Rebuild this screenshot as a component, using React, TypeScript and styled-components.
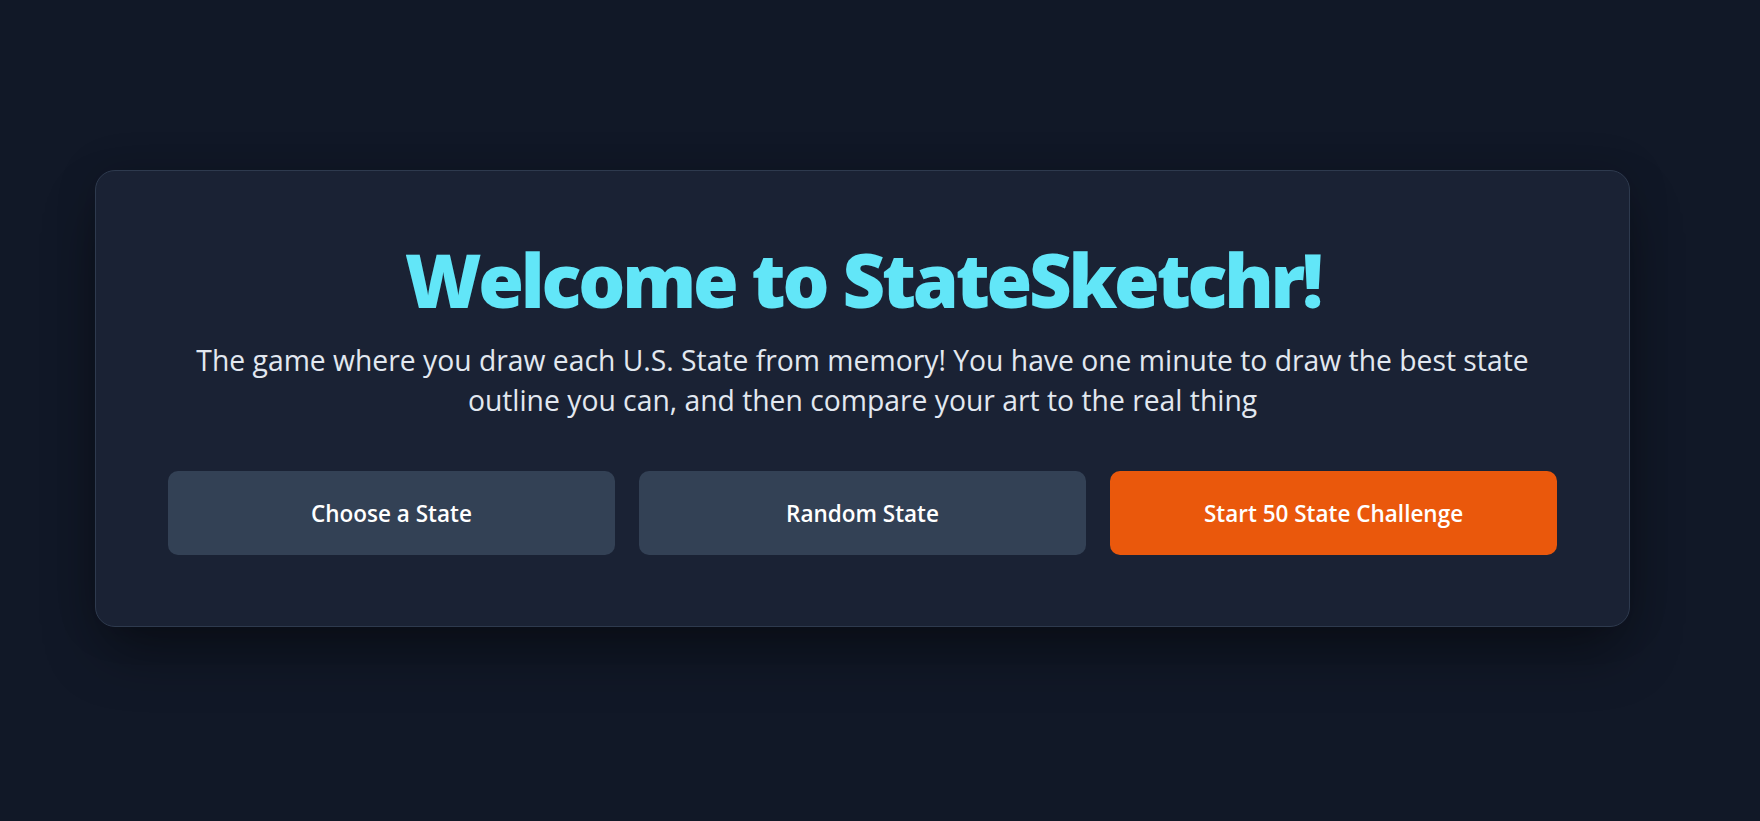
import React from "react";
import styled, { createGlobalStyle } from "styled-components";

const GlobalStyle = createGlobalStyle`
  html, body {
    margin: 0;
    padding: 0;
    background: #111827;
  }
  body {
    font-family: "Open Sans", "Noto Sans", sans-serif;
    -webkit-font-smoothing: antialiased;
  }
`;

const Page = styled.main`
  min-height: 821px;
  box-sizing: border-box;
  padding: 170px 0 0 95px;
  background: #111827;
`;

const Card = styled.section`
  box-sizing: border-box;
  width: 1535px;
  height: 457px;
  padding: 71px 72px;
  background: #1a2234;
  border: 1px solid #2e3a4e;
  border-radius: 20px;
  box-shadow: 0 30px 60px -10px rgba(0, 0, 0, 0.45), 0 0 40px rgba(0, 0, 0, 0.15);
  display: flex;
  flex-direction: column;
  align-items: center;
`;

const Title = styled.h1`
  margin: 0;
  font-family: "Open Sans", "Noto Sans", sans-serif;
  font-weight: 800;
  font-size: 74px;
  line-height: 75px;
  letter-spacing: -3.2px;
  color: #62e6f8;
  text-align: center;
`;

const Subtitle = styled.p`
  margin: 23px 0 51px;
  width: 1390px;
  font-family: "Open Sans", "Noto Sans", sans-serif;
  font-weight: 400;
  font-size: 28.3px;
  line-height: 40px;
  color: #e2e8f0;
  text-align: center;
`;

const ButtonRow = styled.div`
  width: 100%;
  display: grid;
  grid-template-columns: repeat(3, 1fr);
  gap: 24px;
`;

const ActionButton = styled.button<{ $primary?: boolean }>`
  height: 84px;
  border: none;
  border-radius: 10px;
  background: ${(p) => (p.$primary ? "#ea580c" : "#334155")};
  color: #ffffff;
  font-family: "Open Sans", "Noto Sans", sans-serif;
  font-weight: 600;
  font-size: 22.5px;
  cursor: pointer;
`;

export default function App() {
  return (
    <>
      <GlobalStyle />
      <Page>
        <Card>
          <Title>Welcome to StateSketchr!</Title>
          <Subtitle>
            The game where you draw each U.S. State from memory! You have one minute to draw the best state
            outline you can, and then compare your art to the real thing
          </Subtitle>
          <ButtonRow>
            <ActionButton>Choose a State</ActionButton>
            <ActionButton>Random State</ActionButton>
            <ActionButton $primary>Start 50 State Challenge</ActionButton>
          </ButtonRow>
        </Card>
      </Page>
    </>
  );
}
